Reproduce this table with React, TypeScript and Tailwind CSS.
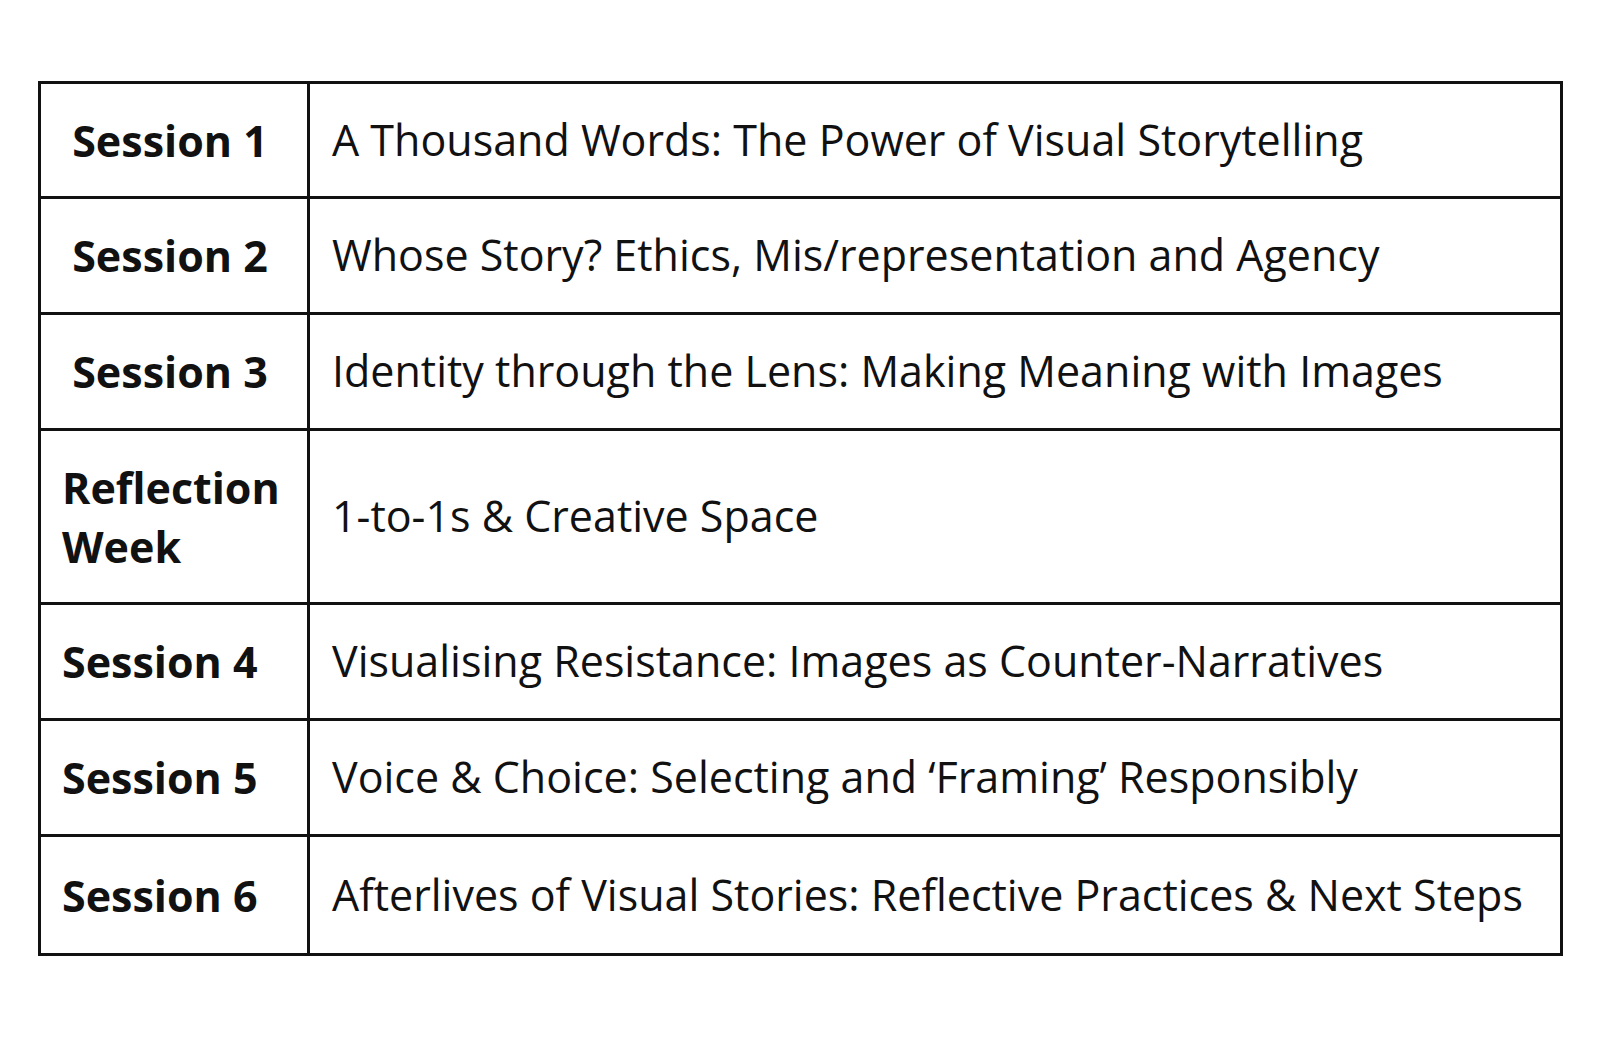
import React from "react";

const rows: { label: React.ReactNode; text: string; center: boolean; h: string }[] = [
  { label: "Session 1", text: "A Thousand Words: The Power of Visual Storytelling", center: true, h: "h-[112px]" },
  { label: "Session 2", text: "Whose Story? Ethics, Mis/representation and Agency", center: true, h: "h-[116px]" },
  { label: "Session 3", text: "Identity through the Lens: Making Meaning with Images", center: true, h: "h-[116px]" },
  { label: (<>Reflection<br />Week</>), text: "1-to-1s & Creative Space", center: false, h: "h-[174px]" },
  { label: "Session 4", text: "Visualising Resistance: Images as Counter-Narratives", center: false, h: "h-[116px]" },
  { label: "Session 5", text: "Voice & Choice: Selecting and \u2018Framing\u2019 Responsibly", center: false, h: "h-[116px]" },
  { label: "Session 6", text: "Afterlives of Visual Stories: Reflective Practices & Next Steps", center: false, h: "h-[119px]" },
];

export default function App() {
  return (
    <div className="w-[1600px] h-[1037px] bg-white pt-[81px] pl-[38px]" style={{ fontFamily: '"Open Sans", sans-serif' }}>
      <div className="w-[1525px] border-[3px] border-[#111] text-[#111]">
        {rows.map((r, i) => (
          <div key={i} className={`flex ${r.h} ${i > 0 ? "border-t-[3px] border-[#111]" : ""}`}>
            <div
              className={`w-[269px] shrink-0 border-r-[3px] border-[#111] flex items-center font-bold text-[43px] leading-[59px] ${
                r.center ? "justify-center pr-[8px]" : "pl-[21px]"
              }`}
            >
              <div>{r.label}</div>
            </div>
            <div className="flex-1 flex items-center pl-[22px] text-[43px]">{r.text}</div>
          </div>
        ))}
      </div>
    </div>
  );
}
